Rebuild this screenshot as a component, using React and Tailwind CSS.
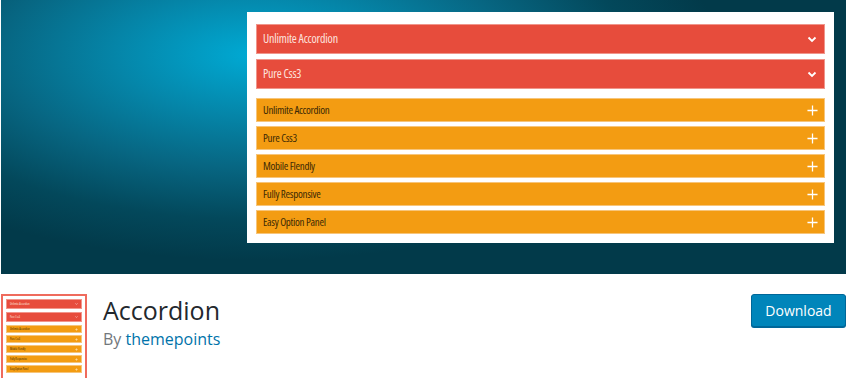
import React from "react";

const redItems = ["Unlimite Accordion", "Pure Css3"];
const orangeItems = [
  "Unlimite Accordion",
  "Pure Css3",
  "Mobile Flendly",
  "Fully Responsive",
  "Easy Option Panel",
];

const Chevron = ({ className }) => (
  <svg viewBox="0 0 10 7" className={className} fill="none">
    <path d="M1.5 1.5 5 5 8.5 1.5" stroke="currentColor" strokeWidth="1.8" />
  </svg>
);

const Plus = ({ className }) => (
  <svg viewBox="0 0 12 12" className={className} fill="none">
    <path d="M6 0.5v11M0.5 6h11" stroke="currentColor" strokeWidth="1.4" />
  </svg>
);

// the accordion demo, drawn big in the banner and small in the icon
const AccordionDemo = ({ small }) => (
  <div className="flex flex-col">
    <div className={small ? "flex flex-col gap-[3px]" : "flex flex-col gap-[5px]"}>
      {redItems.map((item, i) => (
        <div
          key={i}
          className={
            small
              ? "flex items-center justify-between h-[10px] bg-[#e74c3c] border-[0.5px] border-[#f2958b] px-[3px] text-[3px] text-[#fde3df]"
              : "flex items-center justify-between h-[30px] bg-[#e74c3c] border border-[#f0958b] pl-[6px] pr-[7px] text-[12px] text-[#fde3df] tracking-[-0.2px]"
          }
        >
          <span className="font-stretch-condensed">{item}</span>
          <Chevron className={small ? "w-[3px] h-[2px] text-white" : "w-[10px] h-[7px] text-white"} />
        </div>
      ))}
    </div>
    <div className={small ? "flex flex-col gap-[2px] mt-[3px]" : "flex flex-col gap-[4px] mt-[9px]"}>
      {orangeItems.map((item, i) => (
        <div
          key={i}
          className={
            small
              ? "flex items-center justify-between h-[8px] bg-[#f39c12] border-[0.5px] border-[#f7c57a] px-[3px] text-[3px] text-[#3b2a05]"
              : "flex items-center justify-between h-[24px] bg-[#f39c12] border border-[#f7c57a] pl-[6px] pr-[6px] text-[11px] text-[#3b2a05] tracking-[-0.3px]"
          }
        >
          <span className="font-stretch-condensed">{item}</span>
          <Plus className={small ? "w-[3px] h-[3px] text-white" : "w-[11px] h-[11px] text-white"} />
        </div>
      ))}
    </div>
  </div>
);

export default function App() {
  return (
    <div className="w-[847px] h-[378px] bg-white overflow-hidden font-['Open_Sans',sans-serif]">
      {/* Banner */}
      <div className="h-[274px] mx-px bg-[radial-gradient(ellipse_55%_75%_at_30%_20%,#00aad4_0%,#0585a8_30%,#076682_55%,#03485b_80%,#023a4a_100%)] pt-[12px] pl-[246px] pr-[12px]">
        <div className="bg-white pt-[12px] px-[9px] pb-[9px]">
          <AccordionDemo />
        </div>
      </div>

      {/* Plugin header */}
      <div className="flex items-start pt-[20px] pl-px pr-px">
        <div className="w-[86px] h-[86px] shrink-0 border-2 border-[#ef6b5d] bg-white p-[3px]">
          <AccordionDemo small />
        </div>
        <div className="ml-[16px] flex-1 -mt-[2px]">
          <h1 className="text-[25px] leading-[36px] text-[#23282d]">Accordion</h1>
          <p className="text-[16px] leading-[22px] text-[#72777c]">
            By <span className="text-[#0073aa]">themepoints</span>
          </p>
        </div>
        <button className="w-[95px] h-[33px] rounded-[3px] bg-[#0085ba] border border-[#006799] shadow-[0_1px_0_#006799] text-white text-[14px]">
          Download
        </button>
      </div>
    </div>
  );
}
